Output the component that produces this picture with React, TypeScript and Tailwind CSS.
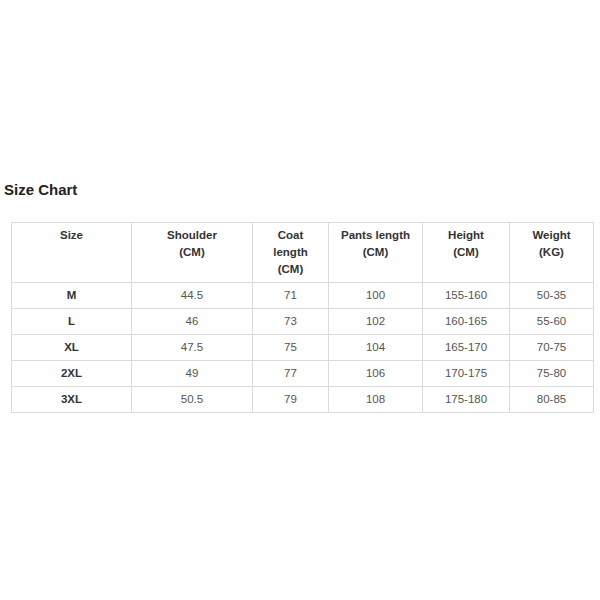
import React from "react";

const rows = [
  ["M", "44.5", "71", "100", "155-160", "50-35"],
  ["L", "46", "73", "102", "160-165", "55-60"],
  ["XL", "47.5", "75", "104", "165-170", "70-75"],
  ["2XL", "49", "77", "106", "170-175", "75-80"],
  ["3XL", "50.5", "79", "108", "175-180", "80-85"],
];

const headers: string[][] = [
  ["Size"],
  ["Shoulder", "(CM)"],
  ["Coat", "length", "(CM)"],
  ["Pants length", "(CM)"],
  ["Height", "(CM)"],
  ["Weight", "(KG)"],
];

const widths = ["w-[120px]", "w-[121px]", "w-[76px]", "w-[94px]", "w-[87px]", "w-[84px]"];

export default function App() {
  return (
    <div className="w-[600px] h-[600px] bg-white" style={{ fontFamily: '"Liberation Sans", Arial, sans-serif' }}>
      <div className="pt-[181px] pl-[4px]">
        <h2 className="text-[15px] leading-[18px] font-bold text-[#222]">Size Chart</h2>
      </div>
      <div className="pl-[11px] pt-[23px]">
        <table className="border-collapse table-fixed w-[583px] text-[11.5px]">
          <colgroup>
            {widths.map((w, i) => (
              <col key={i} className={w} />
            ))}
          </colgroup>
          <thead>
            <tr className="h-[60px]">
              {headers.map((h, i) => (
                <th
                  key={i}
                  className="border border-[#dcdcdc] align-top pt-[4px] p-0 font-bold text-[#333] leading-[17px] text-center"
                >
                  {h.map((l, j) => (
                    <div key={j}>{l}</div>
                  ))}
                </th>
              ))}
            </tr>
          </thead>
          <tbody>
            {rows.map((r, i) => (
              <tr key={i} className="h-[26px]">
                {r.map((c, j) => (
                  <td
                    key={j}
                    className={`border border-[#dcdcdc] p-0 text-center align-middle leading-[17px] ${
                      j === 0 ? "font-bold text-[#333]" : "text-[#555]"
                    }`}
                  >
                    {c}
                  </td>
                ))}
              </tr>
            ))}
          </tbody>
        </table>
      </div>
    </div>
  );
}
